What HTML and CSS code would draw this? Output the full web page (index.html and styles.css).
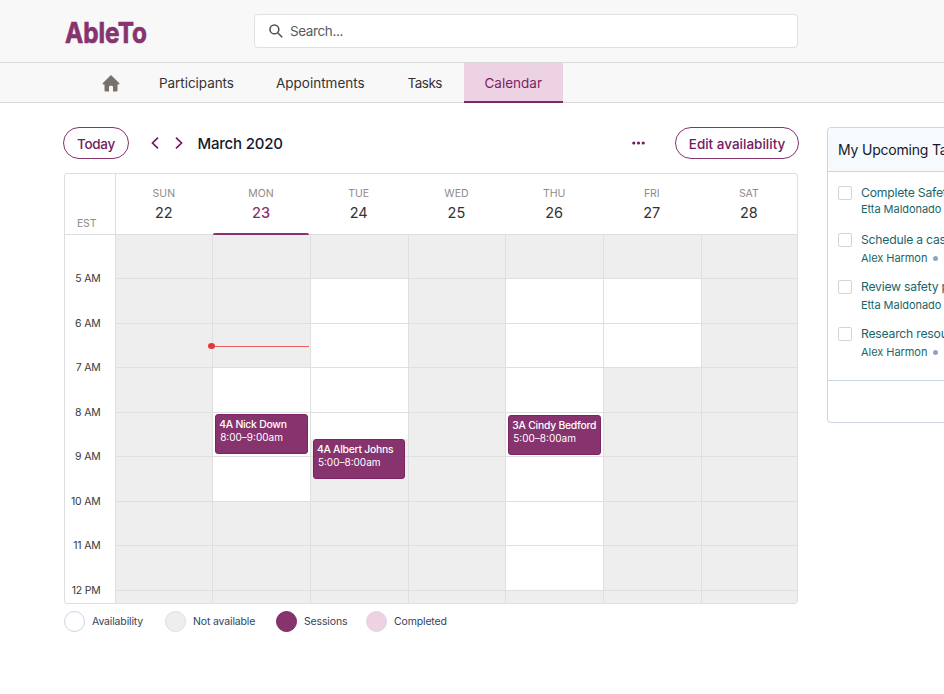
FILE: index.html
```html
<!DOCTYPE html>
<html lang="en">
<head>
    <meta charset="UTF-8">
    <meta name="viewport" content="width=device-width, initial-scale=1.0">
    <title>AbleTo - Calendar</title>
    <link rel="stylesheet" href="styles.css">
</head>
<body>

    <header class="header">
        <svg class="logo" width="84" height="40" viewBox="0 0 84 40">
            <text x="1" y="28.5" textLength="82" lengthAdjust="spacingAndGlyphs">AbleTo</text>
        </svg>
        <div class="search">
            <svg width="14" height="14" viewBox="0 0 14 14" fill="none" stroke="#4a5458" stroke-width="1.6">
                <circle cx="5.4" cy="5.4" r="4.4"/>
                <path d="M8.7 8.7L13.2 13.2"/>
            </svg>
            <span>Search...</span>
        </div>
    </header>

    <nav class="nav">
        <a class="nav-home">
            <svg width="18" height="17" viewBox="0 0 18 17" fill="#76716d">
                <path d="M9 0L17.6 8.4L16.8 9.4H15.5V15.6Q15.5 16.6 14.5 16.6H11V12Q11 10.7 9.7 10.7H8.3Q7 10.7 7 12V16.6H3.5Q2.5 16.6 2.5 15.6V9.4H1.2L0.4 8.4Z"/>
            </svg>
        </a>
        <a class="nav-item participants">Participants</a>
        <a class="nav-item appointments">Appointments</a>
        <a class="nav-item tasks">Tasks</a>
        <a class="nav-item active">Calendar</a>
    </nav>

    <div class="content">
        <main class="main">
            <div class="toolbar">
                <button class="btn today">Today</button>
                <svg class="arrow" width="8" height="12" viewBox="0 0 8 12"><path d="M7 0.7L1.5 6L7 11.3"/></svg>
                <svg class="arrow next" width="8" height="12" viewBox="0 0 8 12"><path d="M1 0.7L6.5 6L1 11.3"/></svg>
                <h1 class="month">March 2020</h1>
                <svg class="more" width="13" height="4" viewBox="0 0 13 4" fill="#751a5e">
                    <circle cx="1.8" cy="2" r="1.6"/>
                    <circle cx="6.5" cy="2" r="1.6"/>
                    <circle cx="11.2" cy="2" r="1.6"/>
                </svg>
                <button class="btn edit">Edit availability</button>
            </div>

            <div class="calendar">
                <div class="row head">
                    <div class="zone">EST</div>
                    <div class="day first"><span>SUN</span><b>22</b></div>
                    <div class="day current"><span>MON</span><b>23</b></div>
                    <div class="day"><span>TUE</span><b>24</b></div>
                    <div class="day"><span>WED</span><b>25</b></div>
                    <div class="day"><span>THU</span><b>26</b></div>
                    <div class="day"><span>FRI</span><b>27</b></div>
                    <div class="day"><span>SAT</span><b>28</b></div>
                </div>
                <div class="row">
                    <div class="time"><span>5 AM</span></div>
                    <div class="slot"></div>
                    <div class="slot"></div>
                    <div class="slot"></div>
                    <div class="slot"></div>
                    <div class="slot"></div>
                    <div class="slot"></div>
                    <div class="slot"></div>
                </div>
                <div class="row">
                    <div class="time"><span>6 AM</span></div>
                    <div class="slot"></div>
                    <div class="slot"></div>
                    <div class="slot open"></div>
                    <div class="slot"></div>
                    <div class="slot open"></div>
                    <div class="slot open"></div>
                    <div class="slot"></div>
                </div>
                <div class="row">
                    <div class="time"><span>7 AM</span></div>
                    <div class="slot"></div>
                    <div class="slot"><div class="now"></div></div>
                    <div class="slot open"></div>
                    <div class="slot"></div>
                    <div class="slot open"></div>
                    <div class="slot open"></div>
                    <div class="slot"></div>
                </div>
                <div class="row">
                    <div class="time"><span>8 AM</span></div>
                    <div class="slot"></div>
                    <div class="slot open"></div>
                    <div class="slot open"></div>
                    <div class="slot"></div>
                    <div class="slot open"></div>
                    <div class="slot"></div>
                    <div class="slot"></div>
                </div>
                <div class="row">
                    <div class="time"><span>9 AM</span></div>
                    <div class="slot"></div>
                    <div class="slot open">
                        <div class="session"><strong>4A Nick Down</strong><span>8:00–9:00am</span></div>
                    </div>
                    <div class="slot half">
                        <div class="session late"><strong>4A Albert Johns</strong><span>5:00–8:00am</span></div>
                    </div>
                    <div class="slot"></div>
                    <div class="slot open">
                        <div class="session lower"><strong>3A Cindy Bedford</strong><span>5:00–8:00am</span></div>
                    </div>
                    <div class="slot"></div>
                    <div class="slot"></div>
                </div>
                <div class="row">
                    <div class="time"><span>10 AM</span></div>
                    <div class="slot"></div>
                    <div class="slot open"></div>
                    <div class="slot"></div>
                    <div class="slot"></div>
                    <div class="slot open"></div>
                    <div class="slot"></div>
                    <div class="slot"></div>
                </div>
                <div class="row">
                    <div class="time"><span>11 AM</span></div>
                    <div class="slot"></div>
                    <div class="slot"></div>
                    <div class="slot"></div>
                    <div class="slot"></div>
                    <div class="slot open"></div>
                    <div class="slot"></div>
                    <div class="slot"></div>
                </div>
                <div class="row">
                    <div class="time"><span>12 PM</span></div>
                    <div class="slot"></div>
                    <div class="slot"></div>
                    <div class="slot"></div>
                    <div class="slot"></div>
                    <div class="slot open"></div>
                    <div class="slot"></div>
                    <div class="slot"></div>
                </div>
                <div class="row last">
                    <div class="time"></div>
                    <div class="slot"></div>
                    <div class="slot"></div>
                    <div class="slot"></div>
                    <div class="slot"></div>
                    <div class="slot"></div>
                    <div class="slot"></div>
                    <div class="slot"></div>
                </div>
            </div>

            <div class="legend">
                <div class="key availability"><i class="dot"></i><span>Availability</span></div>
                <div class="key unavailable"><i class="dot"></i><span>Not available</span></div>
                <div class="key sessions"><i class="dot"></i><span>Sessions</span></div>
                <div class="key completed"><i class="dot"></i><span>Completed</span></div>
            </div>
        </main>

        <aside class="tasks-card">
            <h2>My Upcoming Tasks</h2>
            <ul>
                <li class="tight"><i class="check"></i><div><p>Complete Safety plan</p><small>Etta Maldonado</small></div></li>
                <li><i class="check"></i><div><p>Schedule a case review</p><small>Alex Harmon<i class="sep"></i></small></div></li>
                <li><i class="check"></i><div><p>Review safety plan</p><small>Etta Maldonado</small></div></li>
                <li><i class="check"></i><div><p>Research resources</p><small>Alex Harmon<i class="sep"></i></small></div></li>
            </ul>
            <div class="card-footer"></div>
        </aside>
    </div>

</body>
</html>
```

FILE: styles.css
```css
* {
    box-sizing: border-box;
}

body {
    margin: 0;
    font-family: Inter, "Liberation Sans", sans-serif;
    background-color: #fff;
    color: #333;
    overflow: hidden;
}

/* Header */
.header {
    display: flex;
    height: 63px;
    padding: 14px 0 0 64px;
    background-color: #f8f8f8;
    border-bottom: 1px solid #d9d9d9;
}

.logo text {
    font-size: 29px;
    font-weight: 700;
    fill: #86336e;
    stroke: #86336e;
    stroke-width: 0.7;
}

.search {
    display: flex;
    align-items: center;
    gap: 7px;
    width: 544px;
    height: 34px;
    margin-left: 106px;
    padding-left: 14px;
    background-color: #fff;
    border: 1px solid #e0e0e0;
    border-radius: 4px;
    font-size: 13.5px;
    letter-spacing: -0.4px;
    color: #555c60;
}

/* Navigation */
.nav {
    display: flex;
    height: 40px;
    padding-left: 102px;
    background-color: #f8f8f8;
    border-bottom: 1px solid #d9d9d9;
    font-size: 13.5px;
    line-height: 41px;
}

.nav-home {
    width: 57px;
    padding-top: 12px;
    line-height: 0;
}

.participants {
    width: 117px;
    letter-spacing: -0.05px;
}

.appointments {
    width: 131.5px;
}

.tasks {
    width: 56px;
    letter-spacing: -0.5px;
}

.nav-item.active {
    width: 99px;
    height: 40px;
    padding-left: 21px;
    color: #7c1e64;
    background-color: #ecd2e3;
    border-bottom: 2px solid #7c2966;
}

/* Page body */
.content {
    display: flex;
    gap: 28px;
    padding-left: 63px;
}

.main {
    width: 736px;
    flex-shrink: 0;
}

.toolbar {
    display: flex;
    align-items: center;
    height: 32px;
    margin-top: 24px;
}

.btn {
    height: 32px;
    padding: 1px 0 0;
    background: none;
    border: 1px solid #86336e;
    border-radius: 16px;
    font-family: inherit;
    font-size: 13.5px;
    font-weight: 500;
    color: #751a5e;
    white-space: nowrap;
}

.today {
    width: 66px;
    letter-spacing: -0.3px;
}

.edit {
    width: 124px;
    margin-left: 30px;
}

.arrow {
    margin-left: 22px;
    fill: none;
    stroke: #751a5e;
    stroke-width: 1.7;
}

.next {
    margin-left: 16px;
}

.month {
    margin: 0 auto 0 14.5px;
    font-size: 15px;
    font-weight: 500;
    letter-spacing: -0.2px;
    color: #15182f;
}

/* Calendar */
.calendar {
    width: 734px;
    margin: 14px 0 0 1px;
    border: 1px solid #dedede;
    border-radius: 3px;
    overflow: hidden;
}

.row {
    display: grid;
    grid-template-columns: 49.5px repeat(6, 97.7px) 1fr;
    height: 44.5px;
}

.head {
    height: 60.9px;
}

.head > div {
    border-bottom: 1px solid #dedede;
}

.zone {
    padding: 43px 0 0 12px;
    font-size: 10.5px;
    letter-spacing: -0.2px;
    color: #908b87;
}

.day {
    display: flex;
    flex-direction: column;
    align-items: center;
    padding-top: 13px;
    line-height: 14px;
}

.day span {
    font-size: 10.5px;
    color: #908b87;
}

.day b {
    margin-top: 2px;
    font-size: 14.5px;
    font-weight: 400;
    line-height: 20px;
}

.day.first {
    border-left: 1px solid #dedede;
}

.day.current {
    position: relative;
}

.day.current b {
    color: #86336e;
    font-weight: 500;
}

.day.current::after {
    content: "";
    position: absolute;
    left: 1px;
    right: 1px;
    bottom: -1px;
    height: 2px;
    background-color: #86336e;
    border-radius: 2px 2px 0 0;
}

.time {
    display: flex;
    align-items: flex-end;
    justify-content: flex-end;
    padding-right: 14px;
}

.time span {
    margin-bottom: -7px;
    font-size: 10.5px;
    line-height: 14px;
    letter-spacing: -0.2px;
    color: #3c3a39;
    white-space: nowrap;
}

.slot {
    position: relative;
    background-color: #eee;
    border-left: 1px solid #dfdfdf;
    border-bottom: 1px solid #dfdfdf;
}

.open {
    background-color: #fff;
}

.half {
    background: linear-gradient(#fff 60%, #eee 60%);
}

.last {
    height: 12.4px;
}

.last .slot {
    border-bottom: 0;
}

.now {
    position: absolute;
    top: 22px;
    left: -1px;
    width: 97px;
    height: 1px;
    background-color: #e9605f;
}

.now::before {
    content: "";
    position: absolute;
    left: -4px;
    top: -2.5px;
    width: 7px;
    height: 6px;
    background-color: #e5343a;
    border-radius: 50%;
}

/* Booked sessions sit over the hour lines */
.session {
    position: absolute;
    z-index: 1;
    top: 1px;
    left: 2px;
    width: 92.5px;
    height: 40px;
    padding: 3px 0 0 3px;
    background-color: #86336e;
    border: 1px solid #7c2463;
    border-radius: 3px;
    color: #fff;
    font-size: 10px;
    line-height: 13px;
    white-space: nowrap;
}

.session strong {
    display: block;
    font-size: 10.4px;
    font-weight: 500;
    letter-spacing: -0.25px;
}

.session span {
    padding-left: 1px;
}

.late {
    top: 26px;
}

.lower {
    top: 2px;
}

/* Legend */
.legend {
    display: flex;
    padding: 7px 0 0 1px;
    font-size: 10.5px;
    letter-spacing: -0.15px;
    color: #34435c;
}

.key {
    display: flex;
    align-items: center;
    gap: 7px;
}

.dot {
    width: 21px;
    height: 21px;
    border: 1px solid #c9d5e4;
    border-radius: 50%;
}

.availability {
    width: 101px;
}

.unavailable {
    width: 111px;
}

.sessions {
    width: 90px;
}

.unavailable .dot {
    background-color: #eee;
    border-color: #dedede;
}

.sessions .dot {
    background-color: #86336e;
    border-color: #7c2463;
}

.completed .dot {
    background-color: #ecd2e3;
    border-color: #e8cfe0;
}

/* Upcoming tasks */
.tasks-card {
    flex-shrink: 0;
    width: 260px;
    height: 296px;
    margin-top: 24px;
    border: 1px solid #ccd5e1;
    border-radius: 4px;
    color: #19666a;
}

.tasks-card h2 {
    height: 44px;
    margin: 0;
    padding-left: 10px;
    background-color: #f6fafd;
    border-bottom: 1px solid #ccd5e1;
    border-radius: 4px 4px 0 0;
    font-size: 14px;
    font-weight: 400;
    letter-spacing: -0.2px;
    line-height: 44px;
    color: #15182f;
}

.tasks-card ul {
    height: 208px;
    margin: 0;
    padding: 12px 0 0 10px;
    list-style: none;
}

.tasks-card li {
    display: flex;
    gap: 9px;
    height: 47.1px;
}

.check {
    width: 14px;
    height: 14px;
    margin-top: 2px;
    border: 1px solid #d4d4d4;
    border-radius: 2px;
}

.tasks-card p {
    margin: 0;
    font-size: 12.2px;
    line-height: 17px;
    letter-spacing: -0.22px;
}

.tasks-card small {
    display: flex;
    align-items: center;
    margin-top: 2px;
    font-size: 11px;
    line-height: 16px;
    letter-spacing: -0.05px;
}

.tasks-card .tight small {
    margin-top: 0;
}

.sep {
    width: 5px;
    height: 5px;
    margin-left: 6px;
    background-color: #94a3bd;
    border-radius: 50%;
}

.card-footer {
    border-top: 1px solid #ccd5e1;
}
```
